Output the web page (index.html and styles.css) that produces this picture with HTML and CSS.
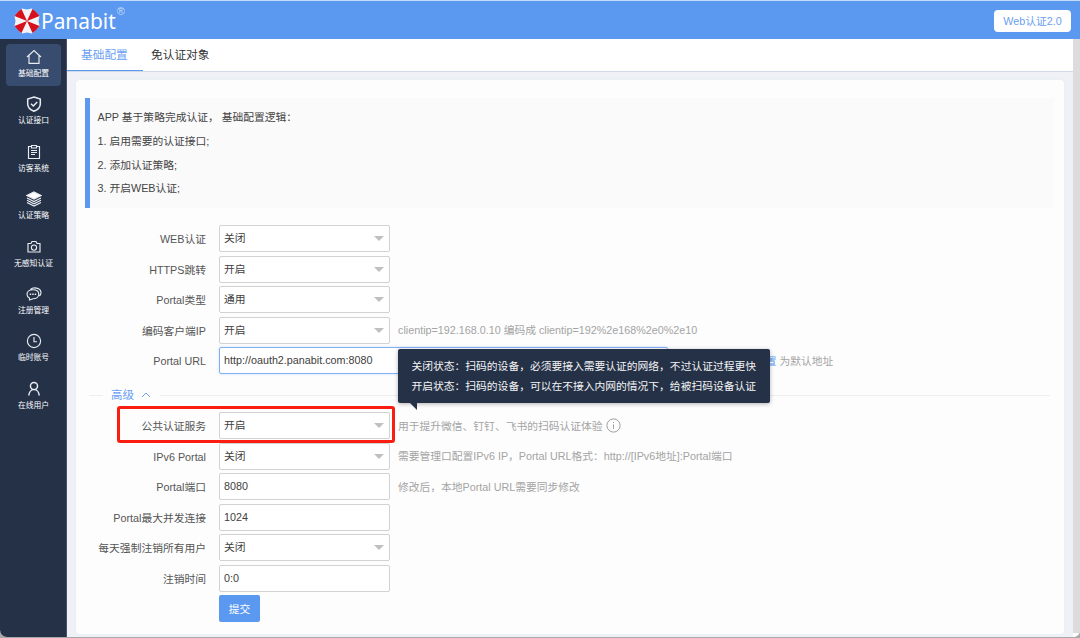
FILE: index.html
```html
<!DOCTYPE html>
<html lang="zh-CN">
<head>
  <meta charset="UTF-8">
  <title>Panabit - Web认证2.0</title>
  <link rel="stylesheet" href="styles.css">
</head>
<body>
  <div class="window">
    <header class="header">
      <div class="logo">
        <svg width="26" height="26" viewBox="-13 -13 26 26">
          <path fill="#f4f3f6" d="M-5 -12.500L0 -11.500L5 -12.500L12.500 -5L11.500 0L12.500 5L5 12.500L0 11.500L-5 12.500L-12.500 5L-11.500 0L-12.500 -5Z"/>
          <path fill="#d8101c" d="M0 0L-5.500 -12L-8.800 -9.300L-12.500 -5ZM0 0L5.500 -12L8.800 -9.300L12.500 -5ZM0 0L12.500 5L8.800 9.300L5.500 12ZM0 0L-5.500 12L-8.800 9.300L-12.500 5Z"/>
        </svg>
        <span class="logo-name">Panabit</span><span class="logo-mark">®</span>
      </div>
      <button class="version">Web认证2.0</button>
    </header>

    <div class="body">
      <nav class="sidebar">
        <a class="nav-item active">
          <svg viewBox="0 0 16 16"><path d="M1 8L8 1.500L15 8M3 6.500V14.300H13V6.500"/></svg>
          <span>基础配置</span>
        </a>
        <a class="nav-item">
          <svg viewBox="0 0 16 16"><path stroke-width="1.5" d="M8 1L14.300 3V8C14.300 11.500 11 14 8 15.200C5 14 1.700 11.500 1.700 8V3ZM5 7.800L7.300 10L11.200 6"/></svg>
          <span>认证接口</span>
        </a>
        <a class="nav-item">
          <svg viewBox="0 0 16 16"><path d="M5 2.500H2.500V14.500H13.500V2.500H11M5.500 1.500H10.500V4H5.500ZM5 6.500H11M5 8.500H11M5 10.500H9"/></svg>
          <span>访客系统</span>
        </a>
        <a class="nav-item">
          <svg viewBox="0 0 16 16"><path fill="#fff" d="M8 1L15 4.500L8 8L1 4.500Z"/><path d="M1 7L8 10.500L15 7M1 9.300L8 12.800L15 9.300M1 11.500L8 15L15 11.500"/></svg>
          <span>认证策略</span>
        </a>
        <a class="nav-item">
          <svg viewBox="0 0 16 16"><path d="M2 4.500H5L6 2.500H10L11 4.500H14V13H2Z"/><circle cx="8" cy="8.600" r="2.600"/></svg>
          <span>无感知认证</span>
        </a>
        <a class="nav-item">
          <svg viewBox="0 0 16 16"><path d="M4.500 3.500C7 .8 14.800 1.500 15 6.500C15 8.300 14.300 9.300 13.300 10M7 3.700C10.500 3.700 12.800 5.600 12.800 8.200C12.800 10.900 10.300 12.700 7 12.700L3.500 14V12C2 11.200 1 9.900 1 8.200C1 5.600 3.500 3.700 7 3.700Z"/><path stroke-width="1.6" d="M3.700 8.300H5.200M6.200 8.300H7.700M8.700 8.300H10.200"/></svg>
          <span>注册管理</span>
        </a>
        <a class="nav-item">
          <svg viewBox="0 0 16 16"><circle cx="8" cy="8" r="6.600"/><path d="M8 4V8.700H11"/></svg>
          <span>临时账号</span>
        </a>
        <a class="nav-item">
          <svg viewBox="0 0 16 16"><path stroke-width="1.5" d="M8 1.500A3.500 3.500 0 1 1 8 8.600A3.500 3.500 0 1 1 8 1.500M2.800 14.500C3 11.500 5 8.600 8 8.600S13 11.500 13.200 14.500"/></svg>
          <span>在线用户</span>
        </a>
      </nav>

      <main class="main">
        <div class="tabs">
          <a class="tab active">基础配置</a>
          <a class="tab">免认证对象</a>
        </div>

        <section class="card">
          <div class="notice">
            <p>APP 基于策略完成认证，&nbsp;基础配置逻辑：</p>
            <p>1. 启用需要的认证接口;</p>
            <p>2. 添加认证策略;</p>
            <p>3. 开启WEB认证;</p>
          </div>

          <div class="form">
            <div class="row"><label>WEB认证</label><div class="field select">关闭</div></div>
            <div class="row"><label>HTTPS跳转</label><div class="field select">开启</div></div>
            <div class="row"><label>Portal类型</label><div class="field select">通用</div></div>
            <div class="row">
              <label>编码客户端IP</label><div class="field select">开启</div>
              <span class="hint">clientip=192.168.0.10 编码成 clientip=192%2e168%2e0%2e10</span>
            </div>
            <div class="row">
              <label>Portal URL</label><div class="field url">http://oauth2.panabit.com:8080</div>
              <span class="hint hint-url"><a>配置</a> 为默认地址</span>
            </div>
          </div>

          <div class="divider">
            <span>高级</span>
            <svg width="10" height="6" viewBox="0 0 10 6"><path d="M1 5L5 1L9 5"/></svg>
          </div>

          <div class="form">
            <div class="row marked">
              <label>公共认证服务</label><div class="field select">开启</div>
              <span class="hint">用于提升微信、钉钉、飞书的扫码认证体验</span>
              <svg class="info" width="15" height="15" viewBox="0 0 15 15"><circle cx="7.500" cy="7.500" r="6.600"/><path d="M7.500 6.500V11M7.500 4V5.100"/></svg>
              <div class="tooltip">
                关闭状态：扫码的设备，必须要接入需要认证的网络，不过认证过程更快<br>
                开启状态：扫码的设备，可以在不接入内网的情况下，给被扫码设备认证
              </div>
            </div>
            <div class="row">
              <label>IPv6 Portal</label><div class="field select">关闭</div>
              <span class="hint">需要管理口配置IPv6 IP，Portal URL格式：http://[IPv6地址]:Portal端口</span>
            </div>
            <div class="row">
              <label>Portal端口</label><div class="field">8080</div>
              <span class="hint">修改后，本地Portal URL需要同步修改</span>
            </div>
            <div class="row"><label>Portal最大并发连接</label><div class="field">1024</div></div>
            <div class="row"><label>每天强制注销所有用户</label><div class="field select">关闭</div></div>
            <div class="row"><label>注销时间</label><div class="field">0:0</div></div>
            <div class="row"><label></label><button class="submit">提交</button></div>
          </div>
        </section>
      </main>
      <div class="scrollbar"></div>
    </div>
  </div>
</body>
</html>
```
FILE: styles.css
```css
*, ::before, ::after { box-sizing: border-box; }
body {
  margin: 0;
  height: 638px;
  overflow: hidden;
  background: #a9a9a9;
  font: 10.77px/16px "Liberation Sans", "Noto Sans CJK SC", sans-serif;
  color: #4c4c4c;
}
button { border: 0; padding: 0; font: inherit; }
.window {
  height: 637px;
  display: flex;
  flex-direction: column;
  overflow: hidden;
  border-radius: 0 0 7px 7px;
  background: #eff1f6;
}

/* header */
.header {
  height: 39px;
  flex: none;
  display: flex;
  align-items: center;
  justify-content: space-between;
  padding: 1px 9px 0 14px;
  border-top: 1px solid #c3dafa;
  background: #5b98f0;
}
.logo { display: flex; align-items: center; color: #fff; }
.logo-name {
  margin-left: 1px;
  font: 20.9px/24px "Noto Sans", sans-serif;
}
.logo-mark { margin: -20px 0 0 1px; font-size: 11px; color: #c5dafa; }
.version {
  width: 77px;
  height: 22px;
  border-radius: 4px;
  background: #fff;
  color: #6b9ff0;
}

.body { flex: 1; display: flex; min-height: 0; }

/* sidebar */
.sidebar {
  width: 67px;
  flex: none;
  padding: 5px 5px 0 6px;
  border-right: 1px solid #46546a;
  background: #243147;
}
.nav-item {
  height: 42px;
  margin-bottom: 5.4px;
  display: flex;
  flex-direction: column;
  align-items: center;
  padding-top: 5px;
  border-radius: 4px;
  color: #fff;
  font-size: 7.8px;
  line-height: 12px;
  white-space: nowrap;
}
.nav-item.active { background: #374c6e; }
.nav-item svg {
  width: 16px;
  height: 16px;
  margin-bottom: 3px;
  fill: none;
  stroke: #e8ebf0;
  stroke-width: 1.15;
}

/* content */
.main { flex: 1; min-width: 0; }
.tabs {
  height: 33px;
  display: flex;
  border-bottom: 1px solid #cfd9e6;
  background: #fff;
  font-size: 11.7px;
  line-height: 31px;
}
.tab { height: 32px; padding: 0 8px; color: #333; }
.tab.active {
  width: 76px;
  padding: 0 0 0 14px;
  border-bottom: 1px solid #5b98f0;
  color: #6b9ff0;
}
.card {
  height: 554px;
  margin: 8px 9px 0;
  padding: 18px 10px 0 9px;
  border-radius: 4px;
  background: #fdfdfd;
  box-shadow: 0 0 3px #e4eaf5;
}
.notice {
  height: 110px;
  padding: 8px 7.5px 0;
  border-left: 5px solid #5b98f0;
  background: #fafafa;
  color: #444;
}
.notice p { margin: 0; line-height: 23.8px; }

/* form */
.form { padding-top: 17px; }
.row {
  position: relative;
  height: 27px;
  margin-bottom: 3.5px;
  display: flex;
  align-items: center;
}
.row label {
  width: 121px;
  margin-right: 13px;
  padding-top: 1px;
  text-align: right;
  color: #555;
}
.field {
  position: relative;
  width: 171px;
  height: 27px;
  padding-left: 4px;
  border: 1px solid #d2d2d2;
  border-radius: 2px;
  background: #fff;
  color: #404040;
  line-height: 25px;
}
.field.url {
  width: 449px;
  border-color: #80b0f8;
  box-shadow: 0 0 3px #cfe0fb;
}
.select::after {
  content: "";
  position: absolute;
  top: 10px;
  right: 5px;
  border: 5px solid transparent;
  border-top-color: #c0c0c0;
  border-bottom: 0;
}
.hint { margin-left: 8px; color: #a4a4a4; white-space: nowrap; }
.hint-url { margin-left: 87px; }
.hint a { color: #5b98f0; }
.info { margin-left: 3px; fill: none; stroke: #a0a0a0; }

.divider {
  height: 16px;
  margin: 13px 4px 0;
  display: flex;
  align-items: center;
  color: #6ba0f2;
  font-size: 11.5px;
}
.divider::before, .divider::after {
  content: "";
  width: 14px;
  height: 1px;
  margin-right: 8px;
  background: #eee;
}
.divider::after { flex: 1; margin: 0 0 0 9px; }
.divider svg { margin-left: 7px; fill: none; stroke: #6ba0f2; }
.divider + .form { padding-top: 9px; }

/* highlighted row */
.marked .hint { padding-top: 1px; }
.marked::before {
  content: "";
  position: absolute;
  left: 32px;
  top: -6px;
  width: 278px;
  height: 37px;
  border: 3px solid #fb1d12;
  border-radius: 3px;
  z-index: 1;
}
.tooltip {
  position: absolute;
  left: 313px;
  top: -63px;
  width: 372px;
  height: 54px;
  padding: 7px 0 0 13.5px;
  border-radius: 2px;
  background: #243147;
  box-shadow: 0 1px 4px rgba(0, 0, 0, .3);
  color: #f4f4f4;
  line-height: 20px;
  white-space: nowrap;
  z-index: 2;
}
.tooltip::after {
  content: "";
  position: absolute;
  left: 12px;
  top: 54px;
  border-top: 7px solid #243147;
  border-left: 7px solid transparent;
}
.submit {
  width: 41px;
  height: 27px;
  border-radius: 2px;
  background: #5b98f0;
  color: #fff;
}

.scrollbar { width: 7px; border-bottom: 4px solid #fff; background: #dcdcdc; }
```
